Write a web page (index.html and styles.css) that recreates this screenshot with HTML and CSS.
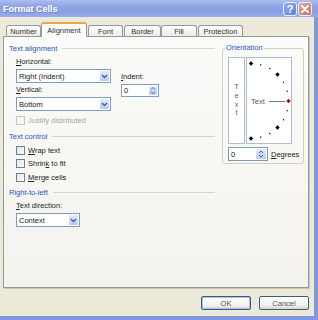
FILE: index.html
```html
<!DOCTYPE html>
<html>
<head>
<meta charset="utf-8">
<link rel="stylesheet" href="styles.css">
</head>
<body>
<div class="window">
  <div class="titlebar">
    <span class="title">Format Cells</span>
    <span class="cbtn help">?</span>
    <span class="cbtn close"><svg width="12" height="12" viewBox="0 0 12 12"><path d="M3 3 L9 9 M9 3 L3 9" stroke="#fff" stroke-width="1.8" stroke-linecap="round"/></svg></span>
  </div>
  <div class="client">
    <div class="tabs">
      <div class="tab t-number">Number</div>
      <div class="tab active t-align">Alignment</div>
      <div class="tab t-font">Font</div>
      <div class="tab t-border">Border</div>
      <div class="tab t-fill">Fill</div>
      <div class="tab t-prot">Protection</div>
    </div>
    <div class="panel">
      <div class="left">
        <div class="ghead">Text alignment</div>
        <div class="align-row">
          <div class="align-col">
            <div class="lbl"><u>H</u>orizontal:</div>
            <div class="select sel-wide"><span class="txt">Right (Indent)</span><span class="drop"><svg width="7" height="5" viewBox="0 0 7 5"><path d="M1 1 L3.5 3.5 L6 1" fill="none" stroke="#4d6185" stroke-width="1.4"/></svg></span></div>
            <div class="lbl lbl-gap"><u>V</u>ertical:</div>
            <div class="select sel-wide"><span class="txt">Bottom</span><span class="drop"><svg width="7" height="5" viewBox="0 0 7 5"><path d="M1 1 L3.5 3.5 L6 1" fill="none" stroke="#4d6185" stroke-width="1.4"/></svg></span></div>
          </div>
          <div class="indent-col">
            <div class="lbl"><u>I</u>ndent:</div>
            <div class="spin"><span class="txt">0</span><span class="arrows"><svg width="6" height="9" viewBox="0 0 6 9"><path d="M1 3.5 L3 1.5 L5 3.5 M1 5.5 L3 7.5 L5 5.5" fill="none" stroke="#4d6185" stroke-width="1"/></svg></span></div>
          </div>
        </div>
        <div class="check disabled check-first"><span class="box"></span>Justify distributed</div>
        <div class="ghead ghead-gap">Text control</div>
        <div class="check check-a"><span class="box"></span><span><u>W</u>rap text</span></div>
        <div class="check check-a"><span class="box"></span><span>Shrin<u>k</u> to fit</span></div>
        <div class="check check-b"><span class="box"></span><span><u>M</u>erge cells</span></div>
        <div class="ghead ghead-gap2">Right-to-left</div>
        <div class="lbl lbl-dir"><u>T</u>ext direction:</div>
        <div class="select sel-ctx"><span class="txt">Context</span><span class="drop"><svg width="7" height="5" viewBox="0 0 7 5"><path d="M1 1 L3.5 3.5 L6 1" fill="none" stroke="#4d6185" stroke-width="1.4"/></svg></span></div>
      </div>
      <fieldset class="orient">
        <legend>Orientation</legend>
        <div class="orient-top">
          <div class="vtext"><span>T</span><span>e</span><span>x</span><span>t</span></div>
          <div class="dial">
            <svg width="44" height="85" viewBox="0 0 44 85">
              <g fill="#000">
                <path d="M4 3.3 L6.2 5.5 L4 7.7 L1.8 5.5 Z"/>
                <path d="M30.5 14.3 L32.7 16.5 L30.5 18.7 L28.3 16.5 Z"/>
                <path d="M30.5 67.3 L32.7 69.5 L30.5 71.7 L28.3 69.5 Z"/>
                <path d="M4 78.3 L6.2 80.5 L4 82.7 L1.8 80.5 Z"/>
                <rect x="13.1" y="6.2" width="1.2" height="1.2"/>
                <rect x="22.15" y="9.9" width="1.2" height="1.2"/>
                <rect x="35.9" y="23.65" width="1.2" height="1.2"/>
                <rect x="39.6" y="32.7" width="1.2" height="1.2"/>
                <rect x="39.6" y="52.1" width="1.2" height="1.2"/>
                <rect x="35.9" y="61.15" width="1.2" height="1.2"/>
                <rect x="22.15" y="74.9" width="1.2" height="1.2"/>
                <rect x="13.1" y="78.6" width="1.2" height="1.2"/>
              </g>
              <text x="4" y="45.7" font-family="Liberation Sans, Arial, sans-serif" font-size="7.5" fill="#555">Text</text>
              <path d="M22 43.5 H38.5" stroke="#777" stroke-width="1"/>
              <path d="M41.5 40.8 L43.7 43 L41.5 45.2 L39.3 43 Z" fill="#c00000"/>
            </svg>
          </div>
        </div>
        <div class="deg-row">
          <div class="spin spin-deg"><span class="txt">0</span><span class="arrows arrows-deg"><svg width="6" height="10" viewBox="0 0 6 10"><path d="M1 4 L3 2 L5 4 M1 6 L3 8 L5 6" fill="none" stroke="#4d6185" stroke-width="1"/></svg></span></div>
          <span class="deg-lbl"><u>D</u>egrees</span>
        </div>
      </fieldset>
    </div>
    <div class="buttons">
      <div class="btn default">OK</div>
      <div class="btn">Cancel</div>
    </div>
  </div>
</div>
</body>
</html>
```

FILE: styles.css
```css
* { box-sizing: border-box; }
html, body { margin: 0; padding: 0; }
body {
  width: 318px;
  height: 320px;
  overflow: hidden;
  font-family: "Liberation Sans", Arial, sans-serif;
  font-size: 7.5px;
  color: #222;
  background: #ece9d8;
}
u { text-decoration: underline; text-underline-offset: 1px; }

.window {
  width: 318px;
  height: 320px;
  display: flex;
  flex-direction: column;
  background: #ece9d8;
}

.titlebar {
  height: 17px;
  flex: none;
  display: flex;
  align-items: center;
  padding: 0 6px 0 3px;
  background: linear-gradient(#aebdf0 0%, #91a5e5 35%, #8a9fe2 70%, #9aaee9 100%);
}
.title {
  flex: 1;
  color: #fff;
  font-weight: bold;
  font-size: 9px;
  text-shadow: 1px 1px 0 rgba(70, 90, 170, 0.35);
}
.cbtn {
  width: 14px;
  height: 14px;
  border: 1px solid #eef2fd;
  border-radius: 3px;
  display: flex;
  align-items: center;
  justify-content: center;
}
.help {
  margin-right: 1px;
  background: linear-gradient(135deg, #93adf3, #5b80e3);
  color: #fff;
  font-weight: bold;
  font-size: 11px;
  line-height: 12px;
}
.close {
  background: linear-gradient(135deg, #e6a6a2, #c96e6b);
}

.client {
  flex: 1;
  display: flex;
  flex-direction: column;
  padding: 5px 5px 0 3px;
  border-right: 4px solid #7f98e0;
  border-bottom: 4px solid #7f98e0;
}

.tabs {
  display: flex;
  align-items: flex-end;
  height: 14px;
  flex: none;
  padding-left: 3px;
}
.tab {
  height: 11px;
  border: 1px solid #919b9c;
  border-bottom: none;
  border-radius: 3px 3px 0 0;
  background: linear-gradient(#ffffff, #ecebe5);
  display: flex;
  align-items: center;
  justify-content: center;
  color: #333;
}
.tab.active {
  height: 15px;
  margin-bottom: -1px;
  position: relative;
  z-index: 1;
  background: #fbfbf9;
  border-top: 2px solid #f0a540;
}
.t-number { width: 35px; }
.t-align { width: 46px; }
.t-font { width: 35px; margin-left: 1px; }
.t-border { width: 37px; margin-left: 1px; }
.t-fill { width: 36px; }
.t-prot { width: 45px; margin-left: 1px; }

.panel {
  height: 252px;
  flex: none;
  border: 1px solid #919b9c;
  background: linear-gradient(#fbfbf9, #f3f2ed);
  box-shadow: 1px 1px 0 #c9c6b8;
  display: flex;
  align-items: flex-start;
  padding: 5px 0 0 5px;
}

.left {
  width: 206px;
  flex: none;
  display: flex;
  flex-direction: column;
}

.ghead {
  display: flex;
  align-items: center;
  height: 12px;
  color: #1f55c0;
}
.ghead::after {
  content: "";
  flex: 1;
  border-top: 1px solid #d8d5c8;
  margin-left: 5px;
}
.ghead-gap { margin-top: 5px; }
.ghead-gap2 { margin-top: 4px; }

.lbl {
  height: 10px;
  line-height: 10px;
  margin-top: 3px;
}
.lbl-gap { margin-top: 2px; }
.lbl-dir { margin-top: 3px; margin-left: 7px; }

.align-row { display: flex; }
.align-col {
  display: flex;
  flex-direction: column;
  margin-left: 7px;
}
.indent-col {
  display: flex;
  flex-direction: column;
  margin-left: 10px;
  padding-top: 15px;
}

.select {
  display: flex;
  align-items: center;
  height: 14px;
  margin-top: 2px;
  border: 1px solid #7f9db9;
  background: #fff;
  padding-left: 2px;
}
.select .txt { flex: 1; }
.sel-wide { width: 95px; }
.sel-ctx { width: 64px; margin-left: 7px; }
.drop {
  width: 9px;
  align-self: stretch;
  margin: 1px;
  border-radius: 1px;
  background: linear-gradient(#e2eafd, #b4c9f6);
  display: flex;
  align-items: center;
  justify-content: center;
}

.spin {
  display: flex;
  align-items: center;
  width: 38px;
  height: 13px;
  margin-top: 2px;
  border: 1px solid #7f9db9;
  background: #fff;
  padding-left: 2px;
}
.spin .txt { flex: 1; }
.arrows {
  width: 8px;
  align-self: stretch;
  margin: 1px;
  border-radius: 1px;
  background: linear-gradient(#e2eafd, #b4c9f6);
  display: flex;
  align-items: center;
  justify-content: center;
}
.spin-deg { width: 40px; height: 14px; margin-top: 0; }
.arrows-deg { width: 10px; }

.check {
  display: flex;
  align-items: center;
  height: 10px;
  margin-left: 7px;
}
.check .box {
  width: 9px;
  height: 9px;
  margin-right: 3px;
  border: 1px solid #6a7f9e;
  background: linear-gradient(135deg, #e6e5de, #fbfbf9);
}
.check.disabled { color: #aca899; }
.check.disabled .box { border-color: #cac8bb; background: #f6f5f1; }
.check-first { margin-top: 4px; }
.check-a { margin-top: 3px; }
.check-b { margin-top: 4px; }

.orient {
  margin: 0 0 0 7px;
  width: 82px;
  min-width: 0;
  border: 1px solid #d0d0bf;
  border-radius: 3px;
  padding: 3px 0 2px 3px;
}
.orient legend {
  padding: 0 1px;
  margin-left: -1px;
  height: 12px;
  line-height: 12px;
  color: #1f55c0;
}
.orient-top {
  display: flex;
  gap: 1px;
  margin-left: 2px;
}
.vtext {
  width: 17px;
  height: 87px;
  border: 1px solid #aebdd1;
  background: #fff;
  display: flex;
  flex-direction: column;
  align-items: center;
  justify-content: center;
  color: #6b6b6b;
  line-height: 8.7px;
}
.dial {
  width: 46px;
  height: 87px;
  border: 1px solid #aebdd1;
  background: #fff;
}
.dial svg { display: block; }
.deg-row {
  display: flex;
  align-items: center;
  margin: 3px 0 0 2px;
}
.deg-lbl { margin-left: 3px; }

.buttons {
  display: flex;
  justify-content: flex-end;
  gap: 8px;
  margin-top: 8px;
}
.btn {
  width: 50px;
  height: 14px;
  border: 1px solid #3d5a85;
  border-radius: 2px;
  background: linear-gradient(#ffffff, #f2f1ec 70%, #d9d4c8);
  display: flex;
  align-items: center;
  justify-content: center;
  color: #555;
}
.btn.default { box-shadow: inset 0 0 0 1px #a4c1f2; }
```
